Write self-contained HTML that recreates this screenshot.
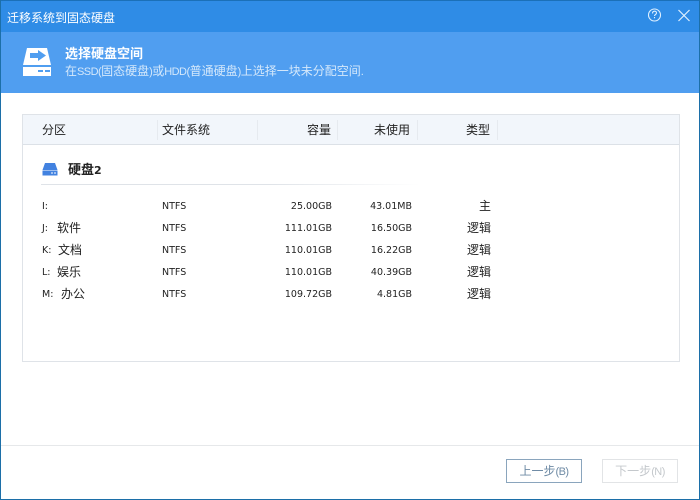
<!DOCTYPE html>
<html><head><meta charset="utf-8">
<style>
html,body{margin:0;padding:0;width:700px;height:500px;overflow:hidden;background:#fff}
body{font-family:"Liberation Sans","WenQuanYi Zen Hei","Noto Sans CJK SC",sans-serif;font-size:12px;color:#222;position:relative}
div{position:absolute;white-space:nowrap}
.t{font-size:12px;line-height:16px}
.r{text-align:right}
.n{font-family:"DejaVu Sans","WenQuanYi Zen Hei",sans-serif;font-size:9.5px;line-height:16px;color:#222;margin-top:1px}
.s{font-size:11px;letter-spacing:-.55px}
</style></head><body>
<div style="left:0;top:0;width:700px;height:32px;background:#2f8ce6;border-top:1px solid #1b70b8;box-sizing:border-box"></div>
<div style="left:0;top:32px;width:700px;height:61px;background:#509ef0"></div>
<div style="left:0;top:0;width:1px;height:500px;background:#1c6fa8"></div>
<div style="left:699px;top:0;width:1px;height:500px;background:#1c6fa8"></div>
<div style="left:0;top:499px;width:700px;height:1px;background:#1c6fa8"></div>
<div style="left:7px;top:10px;color:#fff;font-size:12px;line-height:16px">迁移系统到固态硬盘</div>
<svg style="position:absolute;left:645px;top:6px" width="50" height="20" viewBox="0 0 50 20" fill="none" stroke="#dff0ff" stroke-width="1.1">
<circle cx="9.500" cy="9" r="6"/>
<path d="M7.500 7.500c0-3 4-3 4-.5 0 1.500-2 1.500-2 3M9.500 11v1.200"/>
<path d="M33.500 4l11 11M44.500 4L33.500 15" stroke-width="1.200"/>
</svg>
<svg style="position:absolute;left:22px;top:47px" width="31" height="30" viewBox="0 0 31 30">
<path d="M5 1H25L29 18H1Z" fill="#fff"/>
<rect x="1" y="20" width="28" height="9" fill="#fff"/>
<rect x="16" y="23" width="5" height="2" fill="#509ef0"/><rect x="23" y="23" width="5" height="2" fill="#509ef0"/>
<path d="M8 6H16V3L24 8.500 16 14V11H8Z" fill="#509ef0"/>
</svg>
<div style="left:65px;top:46px;color:#fff;font-size:13px;font-weight:bold;line-height:16px">选择硬盘空间</div>
<div style="left:65px;top:63px;color:#d4e8fb;font-size:12px;line-height:16px">在<span class="s">SSD(</span>固态硬盘<span class="s">)</span>或<span class="s">HDD(</span>普通硬盘<span class="s">)</span>上选择一块未分配空间<span class="s">.</span></div>

<div style="left:22px;top:114px;width:658px;height:248px;border:1px solid #dfe3e8;box-sizing:border-box"></div>
<div style="left:23px;top:115px;width:656px;height:29px;background:#f2f6fb;border-bottom:1px solid #dce1e7"></div>
<div style="left:157px;top:120px;width:1px;height:20px;background:#e6eaef"></div>
<div style="left:257px;top:120px;width:1px;height:20px;background:#e6eaef"></div>
<div style="left:337px;top:120px;width:1px;height:20px;background:#e6eaef"></div>
<div style="left:417px;top:120px;width:1px;height:20px;background:#e6eaef"></div>
<div style="left:497px;top:120px;width:1px;height:20px;background:#e6eaef"></div>
<div class="t" style="left:42px;top:122px">分区</div>
<div class="t" style="left:162px;top:122px">文件系统</div>
<div class="t r" style="left:270px;width:61px;top:122px">容量</div>
<div class="t r" style="left:340px;width:70px;top:122px">未使用</div>
<div class="t r" style="left:430px;width:60px;top:122px">类型</div>

<svg style="position:absolute;left:42px;top:163px" width="16" height="13" viewBox="0 0 16 13">
<path d="M3 0H13L15.500 7H.5Z" fill="#4282e0"/><rect x=".5" y="7.500" width="15" height="5" fill="#4282e0"/>
<rect x="9" y="9.500" width="2" height="1" fill="#fff"/><rect x="12" y="9.500" width="2" height="1" fill="#fff"/>
</svg>
<div style="left:68px;top:162px;font-weight:bold;font-size:13px;line-height:16px;color:#222">硬盘<span style="font-family:'DejaVu Sans',sans-serif;font-size:11px">2</span></div>
<div style="left:41px;top:184px;width:379px;height:1px;background:linear-gradient(90deg,#dfe3e8,#dfe3e8 60%,#fff)"></div>

<div class="n" style="left:42px;top:198px">I:</div>
<div class="n" style="left:42px;top:220px">J:</div><div class="t" style="left:57px;top:220px">软件</div>
<div class="n" style="left:42px;top:242px">K:</div><div class="t" style="left:58px;top:242px">文档</div>
<div class="n" style="left:42px;top:264px">L:</div><div class="t" style="left:57px;top:264px">娱乐</div>
<div class="n" style="left:42px;top:286px">M:</div><div class="t" style="left:61px;top:286px">办公</div>

<div class="n" style="left:162px;top:198px">NTFS</div>
<div class="n" style="left:162px;top:220px">NTFS</div>
<div class="n" style="left:162px;top:242px">NTFS</div>
<div class="n" style="left:162px;top:264px">NTFS</div>
<div class="n" style="left:162px;top:286px">NTFS</div>

<div class="n r" style="left:262px;width:70px;top:198px">25.00GB</div>
<div class="n r" style="left:262px;width:70px;top:220px">111.01GB</div>
<div class="n r" style="left:262px;width:70px;top:242px">110.01GB</div>
<div class="n r" style="left:262px;width:70px;top:264px">110.01GB</div>
<div class="n r" style="left:262px;width:70px;top:286px">109.72GB</div>

<div class="n r" style="left:342px;width:70px;top:198px">43.01MB</div>
<div class="n r" style="left:342px;width:70px;top:220px">16.50GB</div>
<div class="n r" style="left:342px;width:70px;top:242px">16.22GB</div>
<div class="n r" style="left:342px;width:70px;top:264px">40.39GB</div>
<div class="n r" style="left:342px;width:70px;top:286px">4.81GB</div>

<div class="t r" style="left:430px;width:61px;top:198px">主</div>
<div class="t r" style="left:430px;width:61px;top:220px">逻辑</div>
<div class="t r" style="left:430px;width:61px;top:242px">逻辑</div>
<div class="t r" style="left:430px;width:61px;top:264px">逻辑</div>
<div class="t r" style="left:430px;width:61px;top:286px">逻辑</div>

<div style="left:1px;top:445px;width:698px;height:1px;background:#e6e8ea"></div>
<div style="left:506px;top:459px;width:76px;height:24px;border:1px solid #8aa5bd;box-sizing:border-box;text-align:center;line-height:22px;color:#6f8ba5;font-size:12px">上一步<span class="s">(B)</span></div>
<div style="left:602px;top:459px;width:76px;height:24px;border:1px solid #e2e4e6;box-sizing:border-box;text-align:center;line-height:22px;color:#c4c8cc;font-size:12px">下一步<span class="s">(N)</span></div>
</body></html>
